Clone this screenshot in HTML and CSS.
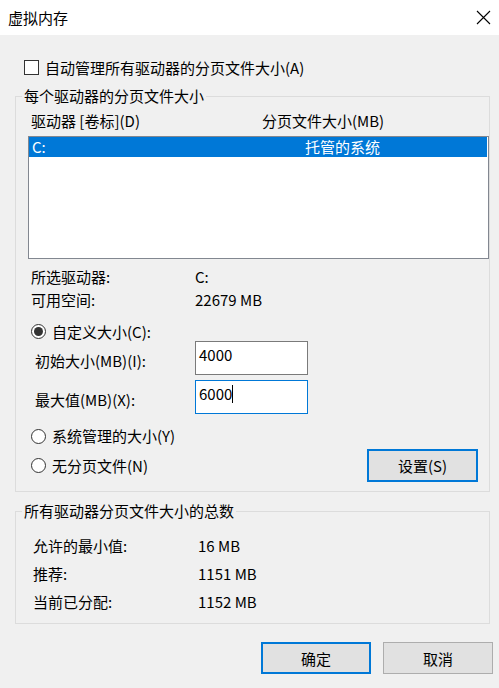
FILE: index.html
```html
<!DOCTYPE html>
<html lang="zh-CN">
<head>
<meta charset="utf-8">
<title>虚拟内存</title>
<link rel="stylesheet" href="styles.css">
</head>
<body>
<div class="titlebar">
  <span class="title">虚拟内存</span>
  <svg class="close" viewBox="0 0 15 15" width="15" height="15"><path d="M1 1 L14 14 M14 1 L1 14" stroke="#000" stroke-width="1.1" fill="none"/></svg>
</div>
<div class="content">
  <div class="check-row"><span class="checkbox"></span><span>自动管理所有驱动器的分页文件大小(A)</span></div>

  <fieldset class="group g1">
    <legend>每个驱动器的分页文件大小</legend>
    <div class="cols"><span>驱动器 [卷标](D)</span><span>分页文件大小(MB)</span></div>
    <div class="listbox">
      <div class="item selected"><span>C:</span><span>托管的系统</span></div>
    </div>
    <div class="info">
      <div class="kv"><span>所选驱动器:</span><span>C:</span></div>
      <div class="kv"><span>可用空间:</span><span>22679 MB</span></div>
    </div>
    <div class="radio-row r1"><span class="radio checked"></span><span>自定义大小(C):</span></div>
    <div class="field f1"><span class="k">初始大小(MB)(I):</span><div class="input">4000</div></div>
    <div class="field f2"><span class="k">最大值(MB)(X):</span><div class="input focus">6000<span class="caret"></span></div></div>
    <div class="radio-row r2"><span class="radio"></span><span>系统管理的大小(Y)</span></div>
    <div class="radio-row r3"><span class="radio"></span><span>无分页文件(N)</span><button class="btn primary set">设置(S)</button></div>
  </fieldset>

  <fieldset class="group g2">
    <legend>所有驱动器分页文件大小的总数</legend>
    <div class="rows">
      <div class="kv2"><span>允许的最小值:</span><span>16 MB</span></div>
      <div class="kv2"><span>推荐:</span><span>1151 MB</span></div>
      <div class="kv2"><span>当前已分配:</span><span>1152 MB</span></div>
    </div>
  </fieldset>

  <div class="actions">
    <button class="btn primary">确定</button>
    <button class="btn">取消</button>
  </div>
</div>
</body>
</html>
```
FILE: styles.css
```css
* { box-sizing: border-box; }
html, body { margin: 0; padding: 0; }
body {
  width: 499px;
  height: 688px;
  overflow: hidden;
  background: #f0f0f0;
  font-family: "Noto Sans CJK SC", "Microsoft YaHei", sans-serif;
  font-size: 15px;
  color: #000;
}
.titlebar {
  height: 35px;
  background: #fff;
  display: flex;
  align-items: center;
  justify-content: space-between;
  padding: 0 8px 0 8px;
}
.title { line-height: 20px; }
.close { display: block; }

.content { padding: 0 6px 0 15px; }

.check-row {
  display: flex;
  align-items: center;
  gap: 6px;
  height: 20px;
  margin-top: 22px;
  padding-left: 9px;
}
.checkbox {
  width: 15px;
  height: 15px;
  border: 1px solid #333;
  background: #fff;
  flex: none;
}

.group {
  margin: 9px 3px 0 0;
  padding: 0;
  border: 1px solid #dcdcdc;
  min-width: 0;
}
.group legend {
  margin-left: 6px;
  padding: 0 2px;
  line-height: 20px;
}

.cols {
  display: grid;
  grid-template-columns: 231px 1fr;
  padding: 5px 0 0 15px;
  line-height: 20px;
}
.listbox {
  margin: 5px 0 0 12px;
  height: 123px;
  border: 1px solid #828790;
  background: #fff;
}
.item {
  display: grid;
  grid-template-columns: 273px 1fr;
  height: 20px;
  line-height: 20px;
  padding-left: 3px;
  margin-right: 1px;
}
.item.selected { background: #0078d7; color: #fff; }

.info { margin-top: 6px; }
.kv {
  display: grid;
  grid-template-columns: 164px 1fr;
  height: 23px;
  line-height: 23px;
  padding-left: 15px;
}

.radio-row {
  display: flex;
  align-items: center;
  gap: 6px;
  padding-left: 15px;
  line-height: 20px;
}
.radio {
  width: 15px;
  height: 15px;
  border: 1px solid #333;
  border-radius: 50%;
  background: #fff;
  display: flex;
  align-items: center;
  justify-content: center;
  flex: none;
}
.radio.checked::after {
  content: "";
  width: 9px;
  height: 9px;
  border-radius: 50%;
  background: #333;
}
.r1 { margin-top: 11px; height: 19px; }
.r2 { margin-top: 12px; height: 20px; }
.r3 { margin-top: 3px; height: 33px; padding-bottom: 0; margin-bottom: 9px; }

.field {
  display: flex;
  align-items: center;
  padding-left: 19px;
}
.field .k { width: 160px; padding-top: 4px; flex: none; }
.f2 { margin-top: 5px; }
.input {
  width: 113px;
  height: 34px;
  border: 1px solid #7a7a7a;
  background: #fff;
  padding: 3px 0 0 3px;
  line-height: 20px;
  display: flex;
  align-items: flex-start;
}
.input.focus { border-color: #0078d7; }
.caret {
  display: inline-block;
  width: 1px;
  height: 18px;
  background: #000;
  margin-top: 1px;
}

.btn {
  width: 110px;
  height: 32px;
  font: inherit;
  color: #000;
  background: #e1e1e1;
  border: 1px solid #adadad;
  padding: 0;
}
.btn.primary { border: 2px solid #0078d7; }
.btn.set { margin-left: auto; margin-right: 11px; width: 111px; height: 33px; }

.rows { padding: 11px 0 7px 17px; }
.kv2 {
  display: grid;
  grid-template-columns: 165px 1fr;
  height: 28px;
  line-height: 28px;
}

.actions {
  display: flex;
  justify-content: flex-end;
  gap: 12px;
  margin-top: 18px;
}
```
